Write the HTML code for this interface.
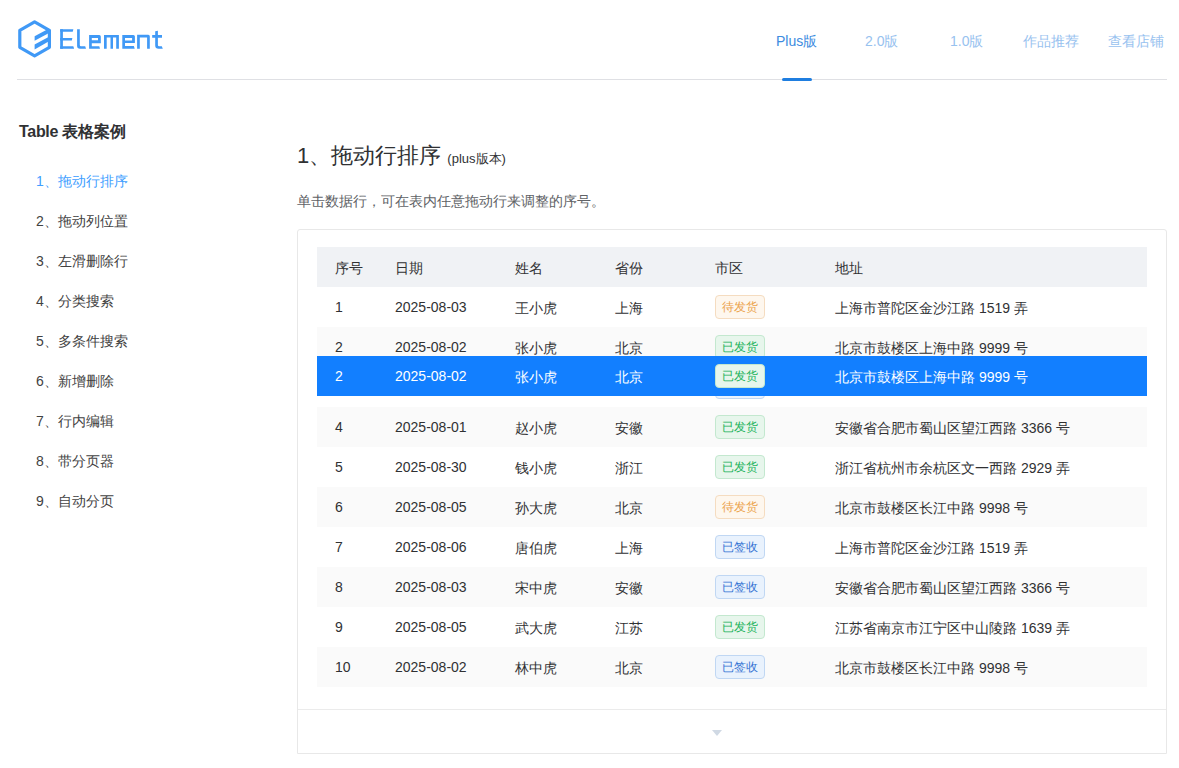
<!DOCTYPE html>
<html><head><meta charset="utf-8">
<style>
*{margin:0;padding:0;box-sizing:border-box}
html,body{width:1179px;height:768px;overflow:hidden;background:#fff}
body{font-family:"Liberation Sans",sans-serif;position:relative;color:#303133}
.abs{position:absolute;white-space:nowrap}
.hdr-line{position:absolute;left:17px;top:79px;width:1150px;height:1px;background:#dfe0e4}
.nav{position:absolute;top:33px;font-size:14px;line-height:16px;color:#98c2ef}
.nav.act{color:#3d8be0}
.uline{position:absolute;left:782px;top:78px;width:30px;height:3px;border-radius:2px;background:#1f7ee0}
.side-title{position:absolute;left:19px;top:123px;font-size:16px;font-weight:bold;line-height:18px;color:#303133}
.side{position:absolute;left:36px;font-size:14px;line-height:16px;color:#424242}
.side.act{color:#409eff}
.title{position:absolute;left:297px;top:143px;font-size:22px;line-height:26px;color:#303133}
.title small{font-size:13px;color:#303133}
.desc{position:absolute;left:297px;top:193px;font-size:14px;line-height:16px;color:#606266}
.card{position:absolute;left:297px;top:229px;width:870px;height:525px;border:1px solid #e8e8e8;border-radius:3px 3px 0 0}
.sep{position:absolute;left:298px;top:709px;width:868px;height:1px;background:#ebebeb}
.tri{position:absolute;left:712px;top:730px;width:0;height:0;border-left:5px solid transparent;border-right:5px solid transparent;border-top:6px solid #d0d9e4}
.row{position:absolute;left:317px;width:830px;height:40px;font-size:14px;color:#303133}
.row.th{background:#f0f2f5}
.row.st{background:#fafafa}
.row .c{position:absolute;top:12px;line-height:16px;white-space:nowrap}
.row .c.k{top:13px}
.c1{left:18px}.c2{left:78px}.c3{left:198px}.c4{left:298px}.c5{left:398px}.c6{left:518px}
.tag{position:absolute;left:398px;top:8px;width:50px;height:24px;border:1px solid;border-radius:4px;font-size:12px;line-height:21px;padding-top:1px;text-align:center}
.tg{background:#e7f6ec;border-color:#c3e8cf;color:#20b25a}
.to{background:#fef7ee;border-color:#f5dcc0;color:#eba24a}
.tb{background:#e9f2fd;border-color:#c0d7f3;color:#3574d4}
.drag{background:#127fff;color:#fff}
</style></head><body>
<!-- logo -->
<svg class="abs" style="left:0;top:0" width="170" height="70" viewBox="0 0 170 70">
<g fill="none" stroke="#4099f6" stroke-width="3.2" stroke-linejoin="round">
<polygon points="34.6,21.9 49.4,30.4 49.4,47.3 34.6,55.8 19.8,47.3 19.8,30.4"/>
</g>
<g fill="#4099f6">
<polygon points="34.6,36.2 49,28.5 49,33 34.6,40.7"/>
<polygon points="34.6,44.5 49,36.8 49,41.3 34.6,49.5"/>
</g>
<g fill="#4099f6">
<rect x="60.2" y="29.2" width="2.7" height="19.6"/>
<path d="M60.2,29.2 H73.4 L72.7,31.8 H60.2Z"/>
<path d="M60.2,38 H72.4 L71.8,40.6 H60.2Z"/>
<path d="M60.2,46.2 H73.3 L74.1,48.8 H60.2Z"/>
<path d="M77.1,29.2 H79.8 V45 Q79.8,46.2 81,46.2 H85.2 L86,48.8 H80 Q77.1,48.8 77.1,46 Z"/>
<path d="M89.1,35.1 H99.3 Q100.8,35.1 100.8,36.6 V43.2 H91.8 V46.2 H99.3 L100,48.8 H89.1Z M91.8,38 V40.3 H98 V38Z" fill-rule="evenodd"/>
<path d="M104,35.1 H118.9 V48.8 H116.2 V37.6 H113 V48.8 H110.5 V37.6 H106.7 V48.8 H104Z"/>
<path d="M122.3,35.1 H133.4 Q134.9,35.1 134.9,36.6 V43 H125 V46 H133.9 L134.7,48.8 H122.3Z M125,38 V40.4 H132.1 V38Z" fill-rule="evenodd"/>
<path d="M137.1,34.8 H148.3 Q149.8,34.8 149.8,36.3 V48.8 H147.1 V37.5 H139.8 V48.8 H137.1Z"/>
<path d="M155.2,31.3 L157.9,30.8 V35.1 H162 V37.7 H157.9 V45 Q157.9,46.2 159.2,46.2 H161.8 L162.8,48.8 H158.6 Q155.2,48.8 155.2,45.5 V37.7 H152.2 V35.1 H155.2Z"/>
</g>
</svg>
<div class="nav act abs" style="left:776px">Plus版</div>
<div class="nav abs" style="left:865px">2.0版</div>
<div class="nav abs" style="left:950px">1.0版</div>
<div class="nav abs" style="left:1023px">作品推荐</div>
<div class="nav abs" style="left:1108px">查看店铺</div>
<div class="hdr-line"></div>
<div class="uline"></div>

<div class="side-title abs"><span style="letter-spacing:-0.3px">Table </span>表格案例</div>
<div class="side act abs" style="top:173px">1、拖动行排序</div>
<div class="side abs" style="top:213px">2、拖动列位置</div>
<div class="side abs" style="top:253px">3、左滑删除行</div>
<div class="side abs" style="top:293px">4、分类搜索</div>
<div class="side abs" style="top:333px">5、多条件搜索</div>
<div class="side abs" style="top:373px">6、新增删除</div>
<div class="side abs" style="top:413px">7、行内编辑</div>
<div class="side abs" style="top:453px">8、带分页器</div>
<div class="side abs" style="top:493px">9、自动分页</div>

<div class="title abs">1、拖动行排序 <small>(plus版本)</small></div>
<div class="desc abs">单击数据行，可在表内任意拖动行来调整的序号。</div>

<div class="card"></div>
<div class="sep"></div>
<div class="tri"></div>

<div class="row th" style="top:247px"><span class="c k c1">序号</span><span class="c k c2">日期</span><span class="c k c3">姓名</span><span class="c k c4">省份</span><span class="c k c5">市区</span><span class="c k c6">地址</span></div>
<div class="row " style="top:287px"><span class="c c1">1</span><span class="c c2">2025-08-03</span><span class="c k c3">王小虎</span><span class="c k c4">上海</span><span class="tag to">待发货</span><span class="c k c6">上海市普陀区金沙江路 1519 弄</span></div>
<div class="row st" style="top:327px"><span class="c c1">2</span><span class="c c2">2025-08-02</span><span class="c k c3">张小虎</span><span class="c k c4">北京</span><span class="tag tg">已发货</span><span class="c k c6">北京市鼓楼区上海中路 9999 号</span></div>
<div class="row " style="top:367px"><span class="c c1">3</span><span class="c c2">2025-08-04</span><span class="c k c3">李小虎</span><span class="c k c4">上海</span><span class="tag tb">已签收</span><span class="c k c6">上海市普陀区金沙江路 1516 弄</span></div>
<div class="row st" style="top:407px"><span class="c c1">4</span><span class="c c2">2025-08-01</span><span class="c k c3">赵小虎</span><span class="c k c4">安徽</span><span class="tag tg">已发货</span><span class="c k c6">安徽省合肥市蜀山区望江西路 3366 号</span></div>
<div class="row " style="top:447px"><span class="c c1">5</span><span class="c c2">2025-08-30</span><span class="c k c3">钱小虎</span><span class="c k c4">浙江</span><span class="tag tg">已发货</span><span class="c k c6">浙江省杭州市余杭区文一西路 2929 弄</span></div>
<div class="row st" style="top:487px"><span class="c c1">6</span><span class="c c2">2025-08-05</span><span class="c k c3">孙大虎</span><span class="c k c4">北京</span><span class="tag to">待发货</span><span class="c k c6">北京市鼓楼区长江中路 9998 号</span></div>
<div class="row " style="top:527px"><span class="c c1">7</span><span class="c c2">2025-08-06</span><span class="c k c3">唐伯虎</span><span class="c k c4">上海</span><span class="tag tb">已签收</span><span class="c k c6">上海市普陀区金沙江路 1519 弄</span></div>
<div class="row st" style="top:567px"><span class="c c1">8</span><span class="c c2">2025-08-03</span><span class="c k c3">宋中虎</span><span class="c k c4">安徽</span><span class="tag tb">已签收</span><span class="c k c6">安徽省合肥市蜀山区望江西路 3366 号</span></div>
<div class="row " style="top:607px"><span class="c c1">9</span><span class="c c2">2025-08-05</span><span class="c k c3">武大虎</span><span class="c k c4">江苏</span><span class="tag tg">已发货</span><span class="c k c6">江苏省南京市江宁区中山陵路 1639 弄</span></div>
<div class="row st" style="top:647px"><span class="c c1">10</span><span class="c c2">2025-08-02</span><span class="c k c3">林中虎</span><span class="c k c4">北京</span><span class="tag tb">已签收</span><span class="c k c6">北京市鼓楼区长江中路 9998 号</span></div>
<div class="row drag" style="top:356px"><span class="c c1">2</span><span class="c c2">2025-08-02</span><span class="c k c3">张小虎</span><span class="c k c4">北京</span><span class="tag tg">已发货</span><span class="c k c6">北京市鼓楼区上海中路 9999 号</span></div>
</body></html>
